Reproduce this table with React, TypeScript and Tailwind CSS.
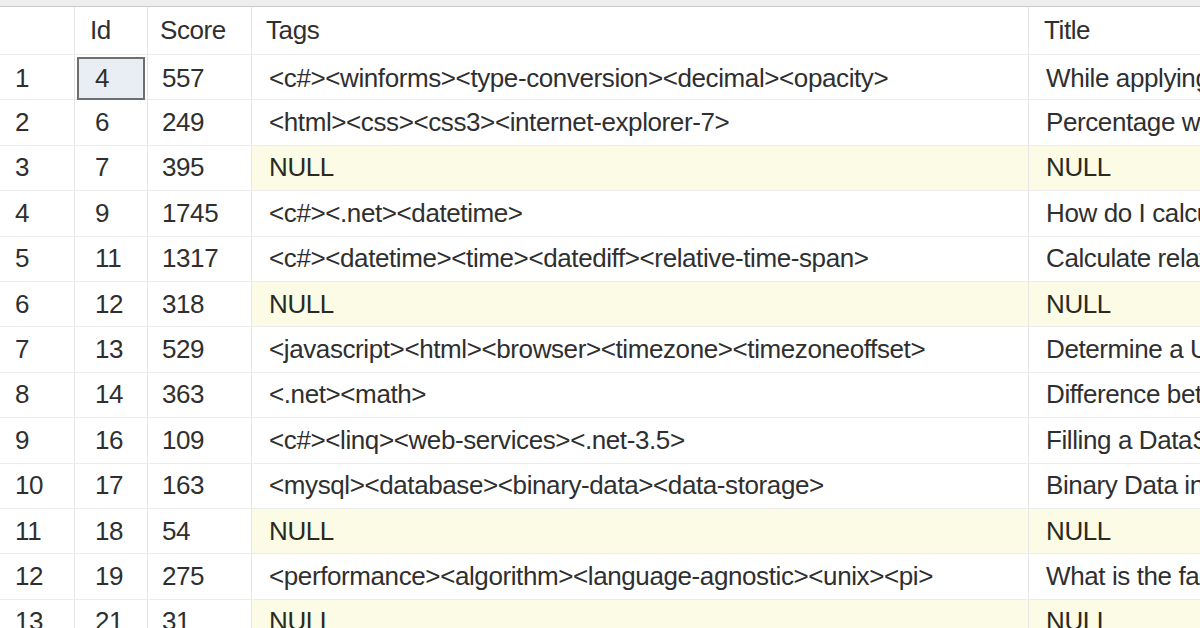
import React from "react";

type Row = { n: number; id: number; score: number; tags: string | null; title: string | null };

const rows: Row[] = [
  { n: 1, id: 4, score: 557, tags: "<c#><winforms><type-conversion><decimal><opacity>", title: "While applying opacity to a form should we use a decimal or double value?" },
  { n: 2, id: 6, score: 249, tags: "<html><css><css3><internet-explorer-7>", title: "Percentage width child element in absolutely positioned parent" },
  { n: 3, id: 7, score: 395, tags: null, title: null },
  { n: 4, id: 9, score: 1745, tags: "<c#><.net><datetime>", title: "How do I calculate someone's age in C#?" },
  { n: 5, id: 11, score: 1317, tags: "<c#><datetime><time><datediff><relative-time-span>", title: "Calculate relative time in C#" },
  { n: 6, id: 12, score: 318, tags: null, title: null },
  { n: 7, id: 13, score: 529, tags: "<javascript><html><browser><timezone><timezoneoffset>", title: "Determine a User's Timezone" },
  { n: 8, id: 14, score: 363, tags: "<.net><math>", title: "Difference between Math.Floor() and Math.Truncate()" },
  { n: 9, id: 16, score: 109, tags: "<c#><linq><web-services><.net-3.5>", title: "Filling a DataSet or DataTable from a LINQ query" },
  { n: 10, id: 17, score: 163, tags: "<mysql><database><binary-data><data-storage>", title: "Binary Data in MySQL" },
  { n: 11, id: 18, score: 54, tags: null, title: null },
  { n: 12, id: 19, score: 275, tags: "<performance><algorithm><language-agnostic><unix><pi>", title: "What is the fastest way to get the value of π?" },
  { n: 13, id: 21, score: 31, tags: null, title: null },
];

const cols = "grid grid-cols-[75px_73px_104px_777px_1fr]";
const cell = "flex items-center overflow-hidden whitespace-nowrap border-r border-[#e6e6e6]";

export default function App() {
  return (
    <div className="h-[628px] w-[1200px] overflow-hidden bg-white text-[26px] tracking-[-0.4px] text-[#2f2f2f] [font-family:'Liberation_Sans',Arial,sans-serif]">
      <div className="h-[7px] border-b border-[#c9c9c9] bg-[#eeeeee]" />
      <div className={`${cols} h-[48px] border-b border-[#ececec]`}>
        <div className={cell} />
        <div className={`${cell} pl-[15px]`}>Id</div>
        <div className={`${cell} pl-[12px]`}>Score</div>
        <div className={`${cell} pl-[14px]`}>Tags</div>
        <div className={`${cell} border-r-0 pl-[15px]`}>Title</div>
      </div>
      {rows.map((r) => (
        <div key={r.n} className={`${cols} h-[45.4px] border-b border-[#ececec]`}>
          <div className={`${cell} pl-[15px]`}>{r.n}</div>
          <div className="flex items-center border-r border-[#e6e6e6] p-[2px]">
            {r.n === 1 ? (
              <div className="flex h-full w-full items-center border-2 border-[#6f6f6f] bg-[#e9eef4] pl-[16px]">
                {r.id}
              </div>
            ) : (
              <div className="pl-[18px]">{r.id}</div>
            )}
          </div>
          <div className={`${cell} pl-[14px]`}>{r.score}</div>
          <div className={`${cell} pl-[17px] ${r.tags === null ? "bg-[#fcfce6] text-[#2a2a1e]" : ""}`}>
            {r.tags ?? "NULL"}
          </div>
          <div className={`${cell} border-r-0 pl-[17px] ${r.title === null ? "bg-[#fcfce6] text-[#2a2a1e]" : ""}`}>
            {r.title ?? "NULL"}
          </div>
        </div>
      ))}
    </div>
  );
}
